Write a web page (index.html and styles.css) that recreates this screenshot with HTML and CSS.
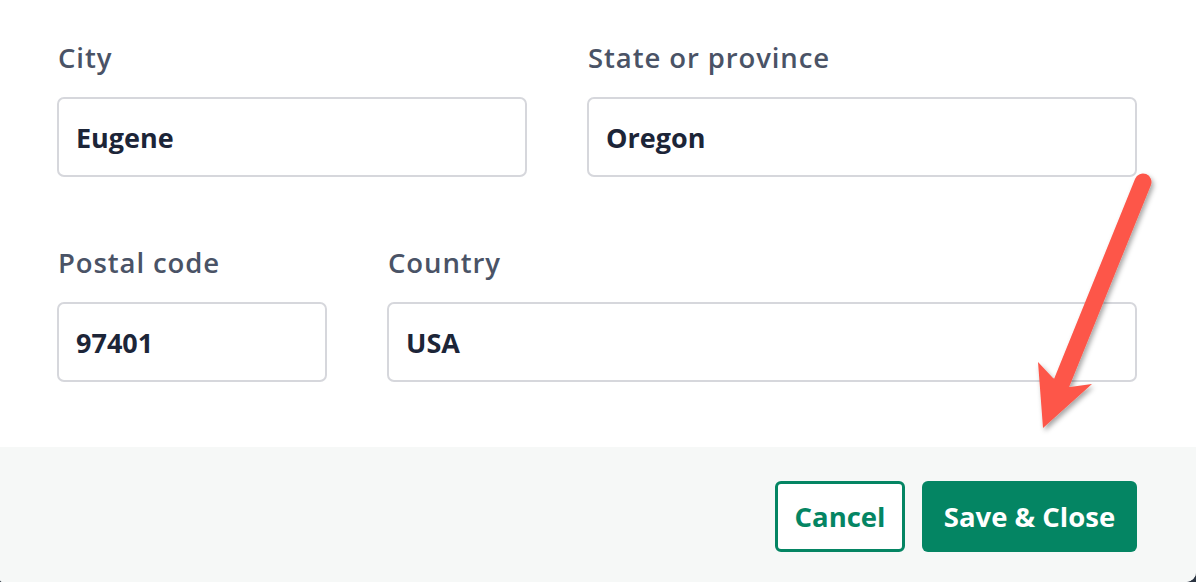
FILE: index.html
```html
<!DOCTYPE html>
<html lang="en">
<head>
<meta charset="utf-8">
<title>Address</title>
<link rel="stylesheet" href="styles.css">
</head>
<body>
<div class="modal">
  <div class="form">
    <div class="row row-1">
      <div class="field">
        <label class="label">City</label>
        <div class="input">Eugene</div>
      </div>
      <div class="field">
        <label class="label">State or province</label>
        <div class="input">Oregon</div>
      </div>
    </div>
    <div class="row row-2">
      <div class="field">
        <label class="label">Postal code</label>
        <div class="input">97401</div>
      </div>
      <div class="field">
        <label class="label">Country</label>
        <div class="input">USA</div>
      </div>
    </div>
  </div>
  <div class="footer">
    <button class="btn btn-outline">Cancel</button>
    <button class="btn btn-primary">Save &amp; Close</button>
  </div>
</div>
<svg class="arrow" width="1196" height="582" viewBox="0 0 1196 582" aria-hidden="true">
  <defs>
    <filter id="sh" x="-20%" y="-20%" width="140%" height="140%">
      <feDropShadow dx="2" dy="3" stdDeviation="2.5" flood-color="#000" flood-opacity="0.35"/>
    </filter>
  </defs>
  <g filter="url(#sh)" fill="#fd574a">
    <line x1="1143" y1="182" x2="1062" y2="382" stroke="#fd574a" stroke-width="17" stroke-linecap="round"/>
    <polygon points="1053,378 1038,362 1043,428 1092,384 1070,387"/>
  </g>
</svg>
</body>
</html>
```
FILE: styles.css
```css
html, body {
  margin: 0;
  padding: 0;
  height: 582px;
  overflow: hidden;
  background: #2b3441;
}
body {
  font-family: "Open Sans", Lato, sans-serif;
  position: relative;
}
.modal {
  background: #ffffff;
  height: 582px;
  overflow: hidden;
  border-bottom-left-radius: 3px;
  border-bottom-right-radius: 10px;
}
.form {
  padding: 42px 59px 65px 57px;
  display: flex;
  flex-direction: column;
  gap: 70px;
}
.row {
  display: flex;
  gap: 60px;
}
.row-1 .field:first-child { width: 470px; flex: none; }
.row-2 .field:first-child { width: 270px; flex: none; }
.field { flex: 1; display: flex; flex-direction: column; }
.label {
  font-size: 27.5px;
  line-height: 32px;
  font-weight: 600;
  letter-spacing: 0.9px;
  color: #4a5366;
  margin-left: 1px;
  margin-bottom: 23px;
}
.input {
  box-sizing: border-box;
  height: 80px;
  border: 2px solid #d6d7dc;
  border-radius: 7px;
  padding: 0 17px;
  display: flex;
  align-items: center;
  font-size: 27px;
  font-weight: 700;
  color: #1c2538;
}
.footer {
  background: #f6f8f7;
  padding: 34px 59px 40px 57px;
  display: flex;
  justify-content: flex-end;
  gap: 17px;
}
.btn {
  box-sizing: border-box;
  height: 71px;
  border-radius: 6px;
  font-family: "Open Sans", Lato, sans-serif;
  font-size: 27.5px;
  font-weight: 700;
  cursor: pointer;
  padding: 0;
}
.btn-outline {
  width: 130px;
  background: #ffffff;
  border: 3px solid #048563;
  color: #048563;
}
.btn-primary {
  width: 215px;
  background: #048563;
  border: none;
  color: #ffffff;
}
.arrow {
  position: absolute;
  left: 0;
  top: 0;
  pointer-events: none;
}
```
